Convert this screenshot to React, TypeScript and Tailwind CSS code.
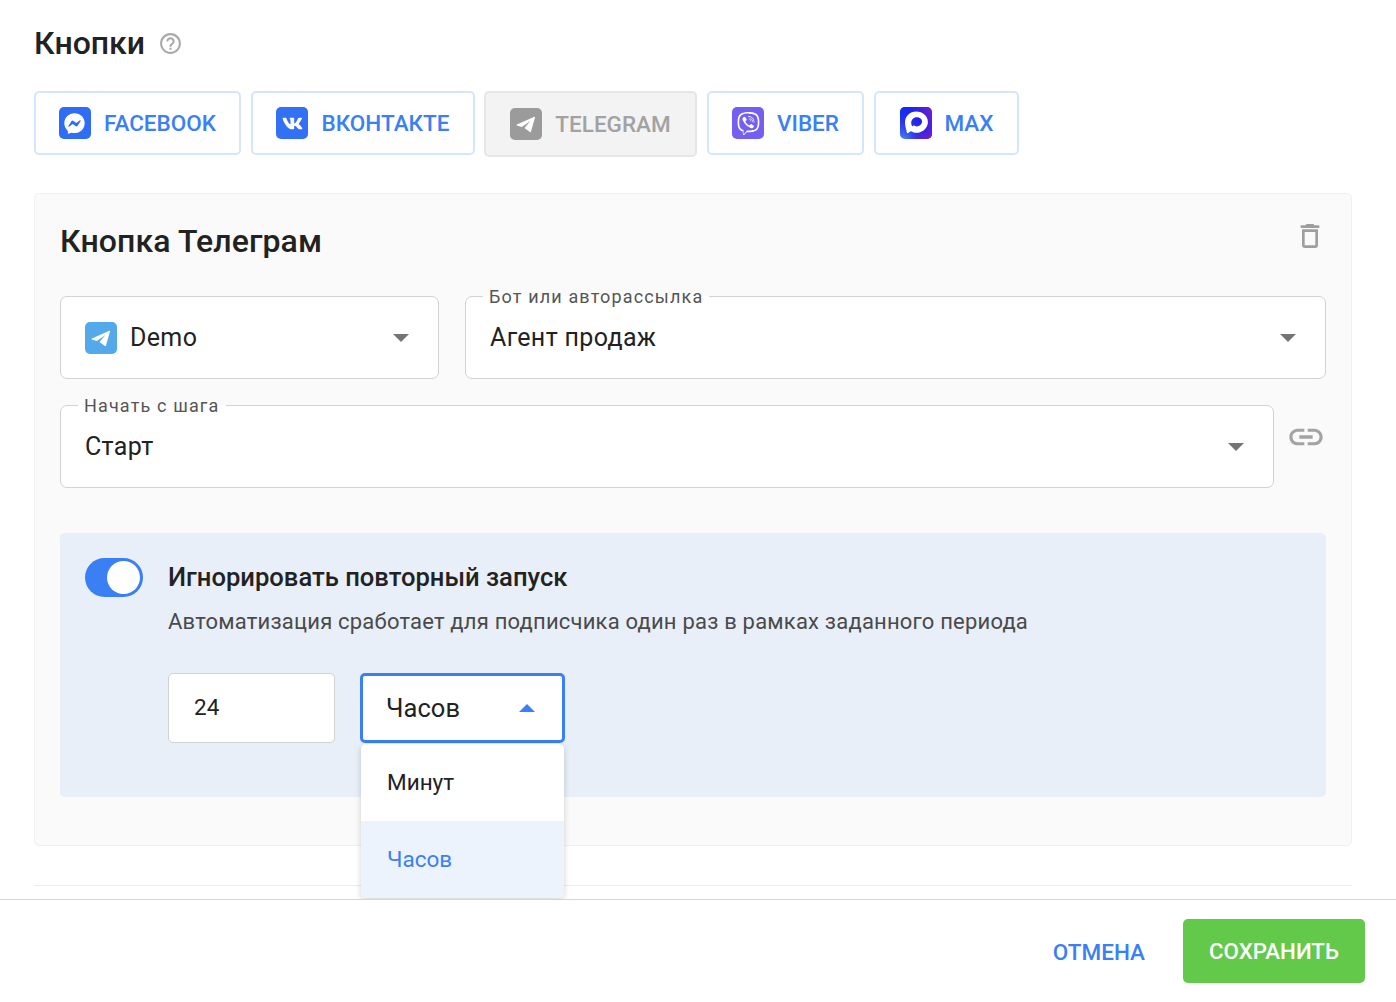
import React from 'react';
import { FaFacebookMessenger, FaVk, FaViber } from 'react-icons/fa';

const PlaneIcon = ({ className }: { className?: string }) => (
  <svg viewBox="0 0 32 32" className={className} fill="currentColor">
    <path d="M24.4 8.7 6.9 16.4c-.5.2-.5.8 0 1l4.9 1.6 8.6-5.9-5.9 6.8 5.4 4.1c.5.3 1 .1 1.1-.4l4-14.2c.1-.5-.3-.9-.6-.7z" />
  </svg>
);

const MaxLogo = () => (
  <svg viewBox="0 0 32 32" className="w-8 h-8 rounded-[5px]">
    <defs>
      <linearGradient id="maxBg" x1="0" y1="1" x2="1" y2="0.2">
        <stop offset="0" stopColor="#4fb4fb" />
        <stop offset="0.35" stopColor="#2a3ff0" />
        <stop offset="0.65" stopColor="#1a1ef0" />
        <stop offset="1" stopColor="#7d1fc8" />
      </linearGradient>
      <linearGradient id="maxBg2" x1="0" y1="0" x2="1" y2="1">
        <stop offset="0" stopColor="#0c2cf5" stopOpacity="0.9" />
        <stop offset="0.6" stopColor="#3b22e0" stopOpacity="0.2" />
        <stop offset="1" stopColor="#8a1cc0" />
      </linearGradient>
    </defs>
    <rect width="32" height="32" fill="url(#maxBg)" />
    <rect width="32" height="32" fill="url(#maxBg2)" />
    <path
      fillRule="evenodd"
      fill="#fff"
      d="M16.3 4.6C9.8 4.6 5 9.3 5 15.6c0 2.4.5 4.4 1 6.2.3 1.2.6 2.6.8 3.6.1.7.9 1 1.5.6l2-1.5c.4-.2.8-.2 1.1 0 1.5.8 3.1 1.3 4.9 1.3 6.3 0 11.6-4.9 11.6-10.9S22.7 4.6 16.3 4.6zm.3 5.6c-3.1 0-5.4 2.5-5.4 5.6 0 1.2.3 2.4.8 3.2.2.3.5.3.7.1l.7-.5c.2-.1.4-.1.6 0 .8.5 1.6.8 2.6.8 3 0 5.4-2.4 5.4-4.9 0-2.6-2.4-4.3-5.4-4.3z"
    />
  </svg>
);

const Arrow = ({ up, className }: { up?: boolean; className?: string }) => (
  <svg viewBox="0 0 16 8" className={`w-[16px] h-[8px] ${className || ''}`} fill="currentColor">
    <path d={up ? 'M0 8 8 0l8 8z' : 'M0 0l8 8 8-8z'} />
  </svg>
);

const TabButton = ({ icon, label, active, className }: { icon: React.ReactNode; label: string; active?: boolean; className: string }) => (
  <button
    className={`${className} flex items-center justify-center rounded-[5px] text-[22.5px] font-medium ${
      active
        ? 'h-[66px] border-2 border-[#e6e6e6] bg-[#f3f3f3] text-[#a2a2a2]'
        : 'h-[64px] border-2 border-[#d6e5fd] bg-white text-[#3b7ff5]'
    }`}
  >
    {icon}
    <span className="ml-[13px] mt-[2px]">{label}</span>
  </button>
);

const IconBox = ({ bg, children }: { bg: string; children: React.ReactNode }) => (
  <span className={`${bg} w-8 h-8 rounded-[5px] flex items-center justify-center text-white shrink-0`}>{children}</span>
);

const Select = ({ label, labelBg, className, children }: { label?: string; labelBg?: string; className: string; children: React.ReactNode }) => (
  <div className={`${className} relative h-[83px] rounded-[7px] border border-[#d2d2d2] bg-white flex items-center pl-[24px] pr-[29px]`}>
    {label && (
      <span className={`${labelBg} absolute left-[17px] top-[-11px] px-[6px] text-[18px] leading-[21px] tracking-[1.15px] text-[#555]`}>
        {label}
      </span>
    )}
    <div className="flex-1 flex items-center text-[25px] tracking-[0.35px] text-[#222]">{children}</div>
    <Arrow className="text-[#757575]" />
  </div>
);

export default function App() {
  return (
    <div className="w-[1396px] h-[1002px] overflow-hidden bg-white flex flex-col font-['Roboto',sans-serif]">
      <div className="relative h-[899px] shrink-0 overflow-hidden pl-[34px] pr-[44px]">
        <div className="flex items-center h-[40px] mt-[23px]">
          <h1 className="text-[32px] leading-[40px] font-medium text-[#222]">Кнопки</h1>
          <svg viewBox="0 0 24 24" className="ml-[13px] w-[25px] h-[25px] text-[#a9a9a9]" fill="currentColor">
            <path d="M11 18h2v-2h-2v2zm1-16C6.48 2 2 6.48 2 12s4.48 10 10 10 10-4.48 10-10S17.52 2 12 2zm0 18c-4.41 0-8-3.59-8-8s3.59-8 8-8 8 3.59 8 8-3.59 8-8 8zm0-14c-2.21 0-4 1.79-4 4h2c0-1.1.9-2 2-2s2 .9 2 2c0 2-3 1.75-3 5h2c0-2.25 3-2.5 3-5 0-2.21-1.79-4-4-4z" />
          </svg>
        </div>

        <div className="flex items-start gap-[10px] mt-[28px]">
          <TabButton className="w-[207px]" label="FACEBOOK" icon={<IconBox bg="bg-[#2f6df6]"><FaFacebookMessenger className="w-[21px] h-[21px]" /></IconBox>} />
          <TabButton className="w-[224px]" label="ВКОНТАКТЕ" icon={<IconBox bg="bg-[#3271f6]"><FaVk className="w-[21px] h-[21px]" /></IconBox>} />
          <TabButton className="w-[213px] -ml-[1px]" active label="TELEGRAM" icon={<IconBox bg="bg-[#9b9b9b]"><PlaneIcon className="w-8 h-8" /></IconBox>} />
          <TabButton className="w-[157px]" label="VIBER" icon={<IconBox bg="bg-[#7360f2]"><FaViber className="w-[23px] h-[23px]" /></IconBox>} />
          <TabButton className="w-[145px]" label="MAX" icon={<MaxLogo />} />
        </div>

        <div className="mt-[36px] h-[653px] rounded-[5px] border border-[#f0f0f0] bg-[#fafafa] px-[25px] pt-[26px]">
          <div className="flex items-start justify-between h-[76px]">
            <h2 className="text-[32px] leading-[42px] font-medium tracking-[0.1px] text-[#222]">Кнопка Телеграм</h2>
            <svg viewBox="0 0 24 24" className="w-[32px] h-[32px] text-[#9e9e9e]" fill="currentColor">
              <path d="M6 19c0 1.1.9 2 2 2h8c1.1 0 2-.9 2-2V7H6v12zM8 9h8v10H8V9zm7.5-5l-1-1h-5l-1 1H5v2h14V4h-3.5z" />
            </svg>
          </div>

          <div className="flex gap-[26px]">
            <Select className="w-[379px]">
              <IconBox bg="bg-[#54a9eb]"><PlaneIcon className="w-8 h-8" /></IconBox>
              <span className="ml-[13px]">Demo</span>
            </Select>
            <Select className="flex-1" label="Бот или авторассылка" labelBg="bg-[linear-gradient(#fafafa_50%,#fff_50%)]">
              Агент продаж
            </Select>
          </div>

          <div className="flex mt-[26px]">
            <Select className="w-[1214px]" label="Начать с шага" labelBg="bg-[linear-gradient(#fafafa_50%,#fff_50%)]">
              Старт
            </Select>
            <svg viewBox="0 0 24 24" className="ml-[12px] mt-[12px] w-[40px] h-[40px] text-[#a3a3a3]" fill="currentColor">
              <path d="M3.9 12c0-1.71 1.39-3.1 3.1-3.1h4V7H7c-2.76 0-5 2.24-5 5s2.24 5 5 5h4v-1.9H7c-1.71 0-3.1-1.39-3.1-3.1zM8 13h8v-2H8v2zm9-6h-4v1.9h4c1.71 0 3.1 1.39 3.1 3.1s-1.39 3.1-3.1 3.1h-4V17h4c2.76 0 5-2.24 5-5s-2.24-5-5-5z" />
            </svg>
          </div>

          <div className="mt-[45px] h-[264px] rounded-[5px] bg-[#e8eff9] pl-[25px] pt-[25px] flex">
            <div className="w-[58px] h-[39px] rounded-full bg-[#3b7ff5] flex items-center justify-end pr-[3px] shrink-0">
              <span className="w-[33px] h-[33px] rounded-full bg-white" />
            </div>
            <div className="ml-[25px]">
              <div className="text-[25.6px] leading-[39px] font-medium text-[#222]">Игнорировать повторный запуск</div>
              <div className="mt-[11px] text-[22px] leading-[28px] tracking-[0.2px] text-[#4a4a4a]">
                Автоматизация сработает для подписчика один раз в рамках заданного периода
              </div>
              <div className="relative flex gap-[25px] mt-[37px]">
                <div className="w-[167px] h-[70px] rounded-[5px] border border-[#d2d2d2] bg-white flex items-center pl-[25px] text-[22.5px] text-[#222]">24</div>
                <div className="w-[205px] h-[70px] rounded-[5px] border-[3px] border-[#3b7ff5] bg-white flex items-center pl-[23px] pr-[27px] justify-between text-[25.5px] tracking-[0.05px] text-[#222]">
                  Часов
                  <Arrow up className="text-[#3b7ff5]" />
                </div>
                <div className="absolute left-[193px] top-[71px] w-[203px] rounded-[5px] bg-white overflow-hidden shadow-[0_2px_6px_rgba(0,0,0,0.18)] text-[22.5px]">
                  <div className="h-[77px] flex items-center pl-[26px] text-[#222]">Минут</div>
                  <div className="h-[77px] flex items-center pl-[26px] bg-[#edf3fd] text-[#3b7ff5]">Часов</div>
                </div>
              </div>
            </div>
          </div>
        </div>

        <div className="mt-[39px] border-t border-[#ececec]" />
      </div>

      <div className="flex-1 border-t border-[#d6d6d6] bg-white flex items-start justify-end pt-[19px] pr-[31px]">
        <button className="mt-[18px] mr-[38px] text-[22.5px] leading-[30px] font-medium text-[#3b7ff5]">ОТМЕНА</button>
        <button className="w-[182px] h-[64px] rounded-[5px] bg-[#63c94b] pt-[2px] text-white text-[22.3px] font-medium">СОХРАНИТЬ</button>
      </div>
    </div>
  );
}
